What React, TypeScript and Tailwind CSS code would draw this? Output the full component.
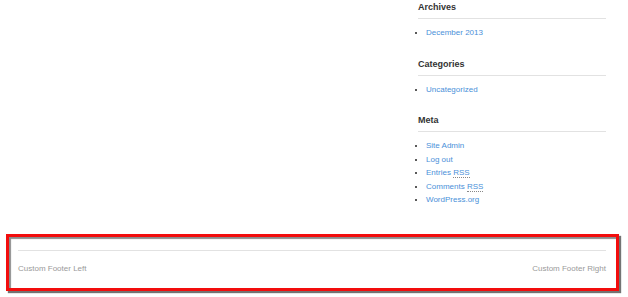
const archives = ["December 2013"];
const categories = ["Uncategorized"];

function Widget({ title, children }: { title: string; children: React.ReactNode }) {
  return (
    <section className="mb-[17px]">
      <h3 className="h-[14px] box-content pb-[4px] border-b border-[#e2e2e2] text-[9px] leading-[14px] font-bold text-[#333]">
        {title}
      </h3>
      <ul className="mt-[7px] list-disc pl-[8px] marker:text-[#222]">{children}</ul>
    </section>
  );
}

function Item({ children }: { children: React.ReactNode }) {
  return (
    <li className="text-[8px] leading-[13.5px] text-[#4a90d9]">
      <a href="#">{children}</a>
    </li>
  );
}

function Rss() {
  return <abbr className="no-underline border-b border-dotted border-[#888]">RSS</abbr>;
}

export default function App() {
  return (
    <div className="w-[628px] h-[297px] bg-white overflow-hidden" style={{ fontFamily: '"Liberation Sans", Arial, sans-serif' }}>
      <div className="flex pl-[18px] pr-[22px] h-[234px]">
        <main className="flex-1" />
        <aside className="w-[188px]">
          <Widget title="Archives">
            {archives.map((a) => (
              <Item key={a}>{a}</Item>
            ))}
          </Widget>
          <Widget title="Categories">
            {categories.map((c) => (
              <Item key={c}>{c}</Item>
            ))}
          </Widget>
          <Widget title="Meta">
            <Item>Site Admin</Item>
            <Item>Log out</Item>
            <Item>Entries <Rss /></Item>
            <Item>Comments <Rss /></Item>
            <Item>WordPress.org</Item>
          </Widget>
        </aside>
      </div>

      {/* highlighted footer */}
      <footer className="ml-[6px] w-[613px] h-[57px] border-[3px] border-[#f20d0d] shadow-[2px_2px_1px_rgba(0,0,0,0.55),inset_2px_2px_1px_rgba(0,0,0,0.45)] pl-[9px] pr-[10px] pt-[13px]">
        <div className="border-t border-[#e2e2e2] pt-[12px] flex justify-between text-[8px] leading-[11px] text-[#9a9a9a]">
          <span>Custom Footer Left</span>
          <span>Custom Footer Right</span>
        </div>
      </footer>
    </div>
  );
}
